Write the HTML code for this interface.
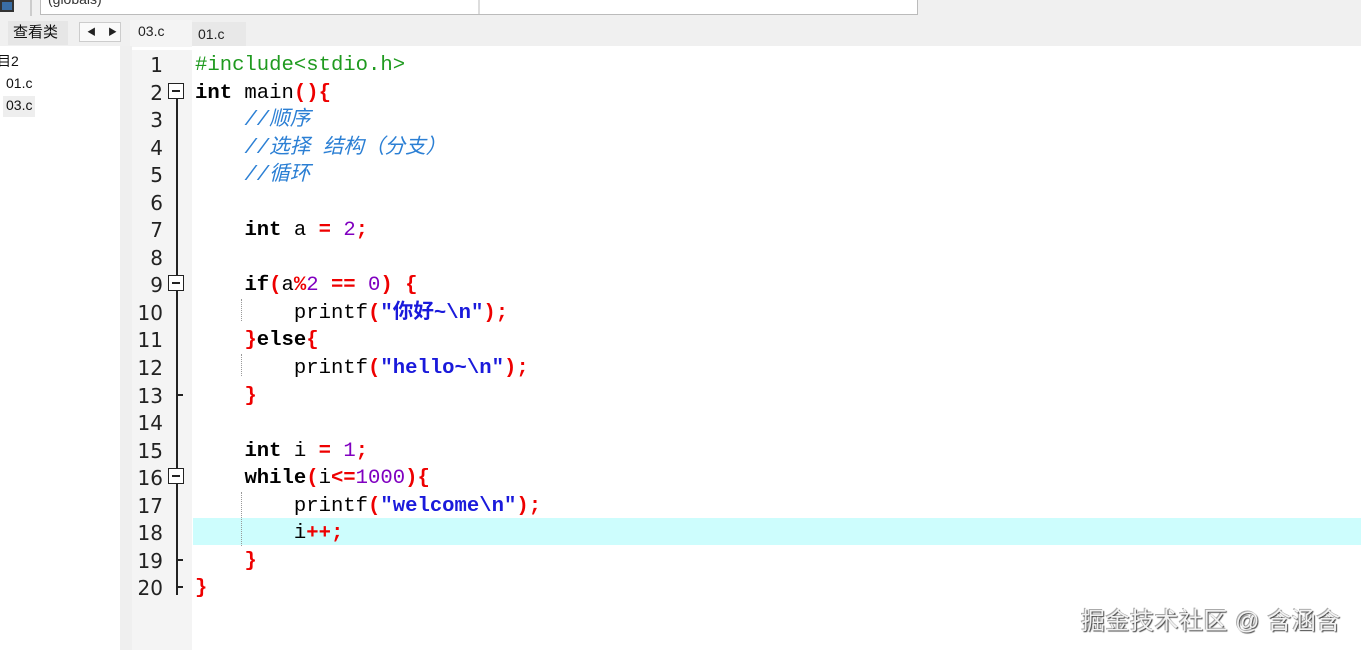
<!DOCTYPE html>
<html><head><meta charset="utf-8"><style>
*{margin:0;padding:0;box-sizing:border-box}
body{width:1361px;height:650px;overflow:hidden;background:#fff;position:relative;font-family:"Liberation Sans","Noto Sans CJK SC",sans-serif}
.a{position:absolute}
.code{position:absolute;left:195px;font-family:"Liberation Mono","Noto Sans CJK SC",monospace;font-size:20.6px;line-height:27.55px;white-space:pre;color:#000}
.ln{position:absolute;left:132px;width:31px;text-align:right;font-family:"DejaVu Sans","Liberation Sans",sans-serif;font-size:20px;line-height:27.55px;color:#222}
.k{font-weight:bold}
.r{color:#e00;font-weight:bold}
.p{color:#8000c0}
.s{color:#1a1adb;font-weight:bold}
.c{color:#2b7fd4;font-style:italic}
.g{color:#1f9a1f}
.box{position:absolute;left:168px;width:16px;height:16px;border:1px solid #222;background:#fff}
.box:after{content:"";position:absolute;left:3px;top:6px;width:8px;height:1.5px;background:#222}
.vl{position:absolute;left:176px;width:1.5px;background:#222}
.tk{position:absolute;left:176px;width:7px;height:1.5px;background:#222}
.dl{position:absolute;left:241px;width:0;border-left:1px dotted #999}
</style></head><body>
<div class="a" style="left:0;top:0;width:1361px;height:46px;background:#f0f0f0"></div>
<div class="a" style="left:0;top:0;width:14px;height:12px;background:#3a6ea5;border:2px solid #333"></div>
<div class="a" style="left:30px;top:0;width:2px;height:16px;background:#ccc"></div>
<div class="a" style="left:40px;top:-2px;width:878px;height:17px;background:#fff;border:1px solid #bbb"></div>
<div class="a" style="left:478px;top:0;width:2px;height:14px;background:#ddd"></div>
<div class="a" style="left:48px;top:-9px;font-size:14px;color:#333">(globals)</div>
<div class="a" style="left:8px;top:21px;width:60px;height:24px;background:#e6e6e6;font-size:15px;line-height:24px;padding-left:5px;color:#111">查看类</div>
<div class="a" style="left:79px;top:22px;width:42px;height:20px;border:1px solid #ccc;background:#fafafa;font-size:9px;line-height:18px;color:#222"><span style="position:absolute;left:7px">◀</span><span style="position:absolute;left:28px">▶</span></div>
<div class="a" style="left:130px;top:20px;width:62px;height:27px;background:#f4f4f4;font-size:14px;padding:3px 0 0 8px;color:#222">03.c</div>
<div class="a" style="left:192px;top:22px;width:54px;height:24px;background:#e8e8e8;font-size:14px;padding:4px 0 0 6px;color:#222">01.c</div>
<div class="a" style="left:0;top:46px;width:120px;height:604px;background:#fff"></div>
<div class="a" style="left:120px;top:46px;width:12px;height:604px;background:#efefef"></div>
<div class="a" style="left:132px;top:50px;width:60px;height:600px;background:#f4f4f4"></div>
<div class="a" style="left:-3px;top:51px;font-size:14px;color:#111">目2</div>
<div class="a" style="left:6px;top:75px;font-size:14px;color:#111">01.c</div>
<div class="a" style="left:3px;top:96px;width:32px;height:21px;background:#eee"></div>
<div class="a" style="left:6px;top:97px;font-size:14px;color:#111">03.c</div>
<div class="a" style="left:193px;top:518px;width:1168px;height:27px;background:#cdfdfd"></div>
<div class="ln" style="top:52px">1<br>2<br>3<br>4<br>5<br>6<br>7<br>8<br>9<br>10<br>11<br>12<br>13<br>14<br>15<br>16<br>17<br>18<br>19<br>20</div>
<div class="vl" style="top:99px;height:496px"></div>
<div class="box" style="top:83px"></div>
<div class="box" style="top:275px"></div>
<div class="box" style="top:468px"></div>
<div class="tk" style="top:394px"></div>
<div class="tk" style="top:559px"></div>
<div class="tk" style="top:586px"></div>
<div class="dl" style="top:299px;height:22px"></div>
<div class="dl" style="top:354px;height:22px"></div>
<div class="dl" style="top:492px;height:54px"></div>
<div class="code" style="top:52px"><span class="g">#include&lt;stdio.h&gt;</span>
<span class="k">int</span> main<span class="r">(){</span>
    <span class="c">//顺序</span>
    <span class="c">//选择 结构（分支）</span>
    <span class="c">//循环</span>

    <span class="k">int</span> a <span class="r">=</span> <span class="p">2</span><span class="r">;</span>

    <span class="k">if</span><span class="r">(</span>a<span class="r">%</span><span class="p">2</span> <span class="r">==</span> <span class="p">0</span><span class="r">)</span> <span class="r">{</span>
        printf<span class="r">(</span><span class="s">"你好~\n"</span><span class="r">);</span>
    <span class="r">}</span><span class="k">else</span><span class="r">{</span>
        printf<span class="r">(</span><span class="s">"hello~\n"</span><span class="r">);</span>
    <span class="r">}</span>

    <span class="k">int</span> i <span class="r">=</span> <span class="p">1</span><span class="r">;</span>
    <span class="k">while</span><span class="r">(</span>i<span class="r">&lt;=</span><span class="p">1000</span><span class="r">){</span>
        printf<span class="r">(</span><span class="s">"welcome\n"</span><span class="r">);</span>
        i<span class="r">++;</span>
    <span class="r">}</span>
<span class="r">}</span></div>
<div class="a" style="left:1081px;top:601px;font-size:24px;letter-spacing:0.5px;color:#f2f2f2;text-shadow:1px 1px 1px #444,-1px -1px 0 #aaa">掘金技术社区 @ 含涵含</div>
</body></html>
